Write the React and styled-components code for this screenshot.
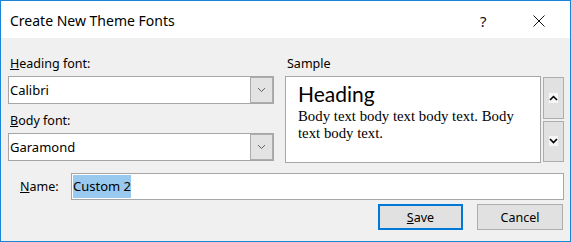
import styled, { createGlobalStyle } from "styled-components";

const GlobalStyle = createGlobalStyle`
  html, body {
    margin: 0;
    padding: 0;
    background: #ffffff;
  }
  * {
    box-sizing: border-box;
  }
`;

const ui = `"Noto Sans", "Open Sans", sans-serif`;

function Chevron({ dir = "down", size = 9, color = "#606060", width = 1 }) {
  const points = dir === "down" ? "1,2 4.5,5.5 8,2" : "1,6 4.5,2.5 8,6";
  return (
    <svg width={size} height={size * 0.9} viewBox="0 0 9 8">
      <polyline points={points} fill="none" stroke={color} strokeWidth={width} />
    </svg>
  );
}

function Dropdown({ value }) {
  return (
    <ComboStyled>
      <ComboValue>{value}</ComboValue>
      <ComboButton>
        <Chevron />
      </ComboButton>
    </ComboStyled>
  );
}

function App() {
  return (
    <>
      <GlobalStyle />
      <WindowStyled>
        <TitleBar>
          <TitleText>Create New Theme Fonts</TitleText>
          <HelpMark>?</HelpMark>
          <CloseIcon>
            <svg width="12" height="12" viewBox="0 0 12 12">
              <path d="M0.5 0.5 L11.5 11.5 M11.5 0.5 L0.5 11.5" stroke="#111" strokeWidth="1" />
            </svg>
          </CloseIcon>
        </TitleBar>
        <Body>
          <TopGrid>
            <Column>
              <Label>
                <u>H</u>eading font:
              </Label>
              <Dropdown value="Calibri" />
              <Label $spaced>
                <u>B</u>ody font:
              </Label>
              <Dropdown value="Garamond" />
            </Column>
            <Column>
              <Label>Sample</Label>
              <SampleRow>
                <SampleBox>
                  <SampleHeading>Heading</SampleHeading>
                  <SampleBody>Body text body text body text. Body text body text.</SampleBody>
                </SampleBox>
                <ScrollColumn>
                  <ScrollButton>
                    <ArrowChip>
                      <Chevron dir="up" color="#000" width={1.6} />
                    </ArrowChip>
                  </ScrollButton>
                  <ScrollButton>
                    <ArrowChip>
                      <Chevron dir="down" color="#000" width={1.6} />
                    </ArrowChip>
                  </ScrollButton>
                </ScrollColumn>
              </SampleRow>
            </Column>
          </TopGrid>
          <NameRow>
            <NameLabel>
              <u>N</u>ame:
            </NameLabel>
            <NameInput>
              <Selected>Custom 2</Selected>
            </NameInput>
          </NameRow>
          <ButtonRow>
            <DialogButton $primary>
              <u>S</u>ave
            </DialogButton>
            <DialogButton>Cancel</DialogButton>
          </ButtonRow>
        </Body>
      </WindowStyled>
    </>
  );
}

const WindowStyled = styled.div`
  width: 571px;
  height: 242px;
  border: 1px solid #1a84d8;
  display: flex;
  flex-direction: column;
  font-family: ${ui};
  color: #000;
  overflow: hidden;
`;

const TitleBar = styled.div`
  height: 37px;
  flex-shrink: 0;
  background: #ffffff;
  display: flex;
  align-items: center;
  padding-left: 9px;
`;

const TitleText = styled.div`
  flex: 1;
  font-size: 14px;
  line-height: 20px;
  color: #000;
  padding-top: 2px;
`;

const HelpMark = styled.div`
  font-size: 15px;
  line-height: 20px;
  color: #111;
  width: 10px;
  padding-top: 2px;
`;

const CloseIcon = styled.div`
  display: flex;
  margin-left: 43px;
  margin-right: 25px;
  padding-top: 2px;
`;

const Body = styled.div`
  flex: 1;
  background: #f0f0f0;
  padding: 18px 6px 0 7px;
  display: flex;
  flex-direction: column;
`;

const TopGrid = styled.div`
  display: grid;
  grid-template-columns: 266px 1fr;
  column-gap: 11px;
`;

const Column = styled.div`
  display: flex;
  flex-direction: column;
`;

const Label = styled.div`
  font-size: 12.5px;
  line-height: 16px;
  height: 16px;
  margin-bottom: 4px;
  margin-top: ${(p) => (p.$spaced ? "9px" : "0")};
  padding-left: 2px;
  white-space: nowrap;
`;

const ComboStyled = styled.div`
  height: 28px;
  background: #ffffff;
  border: 1px solid #a6a6a6;
  display: flex;
  align-items: stretch;
`;

const ComboValue = styled.div`
  flex: 1;
  font-size: 13px;
  line-height: 26px;
  padding-left: 1px;
`;

const ComboButton = styled.div`
  width: 23px;
  background: #e3e3e3;
  border: 1px solid #acacac;
  display: flex;
  align-items: center;
  justify-content: center;
`;

const SampleRow = styled.div`
  display: flex;
  height: 87px;
  gap: 2px;
`;

const SampleBox = styled.div`
  flex: 1;
  background: #ffffff;
  border: 1px solid #a6a6a6;
  padding: 5px 12px 0 12px;
`;

const SampleHeading = styled.div`
  font-family: "Lato", "Noto Sans", sans-serif;
  font-size: 21px;
  line-height: 24px;
  color: #000;
`;

const SampleBody = styled.div`
  margin-top: 2px;
  font-family: "Liberation Serif", "Times New Roman", serif;
  font-size: 14.8px;
  line-height: 16.8px;
  color: #000;
`;

const ScrollColumn = styled.div`
  width: 21px;
  display: flex;
  flex-direction: column;
  gap: 2px;
  padding: 1px 0;
`;

const ScrollButton = styled.div`
  flex: 1;
  background: #e1e1e1;
  border: 1px solid #adadad;
  display: flex;
  align-items: center;
  justify-content: center;
`;

const ArrowChip = styled.div`
  display: flex;
  background: #f6f6f6;
  padding: 1px 0;
`;

const NameRow = styled.div`
  display: flex;
  align-items: center;
  margin-top: 10px;
  padding-left: 11px;
`;

const NameLabel = styled.div`
  width: 52px;
  font-size: 12.5px;
  line-height: 16px;
  padding-left: 1px;
`;

const NameInput = styled.div`
  flex: 1;
  height: 27px;
  background: #ffffff;
  border: 1px solid #a6a6a6;
  padding: 1px;
  display: flex;
  align-items: stretch;
`;

const Selected = styled.span`
  background: #99c9ef;
  font-size: 13px;
  line-height: 23px;
  color: #000;
`;

const ButtonRow = styled.div`
  display: flex;
  justify-content: flex-end;
  gap: 14px;
  margin-top: 4px;
  padding-right: 1px;
`;

const DialogButton = styled.div`
  width: ${(p) => (p.$primary ? "85px" : "86px")};
  height: 26px;
  background: #e1e1e1;
  border: ${(p) => (p.$primary ? "2px solid #0078d7" : "1px solid #adadad")};
  display: flex;
  align-items: center;
  justify-content: center;
  font-size: 12.5px;
  color: #000;
`;

export default App;
